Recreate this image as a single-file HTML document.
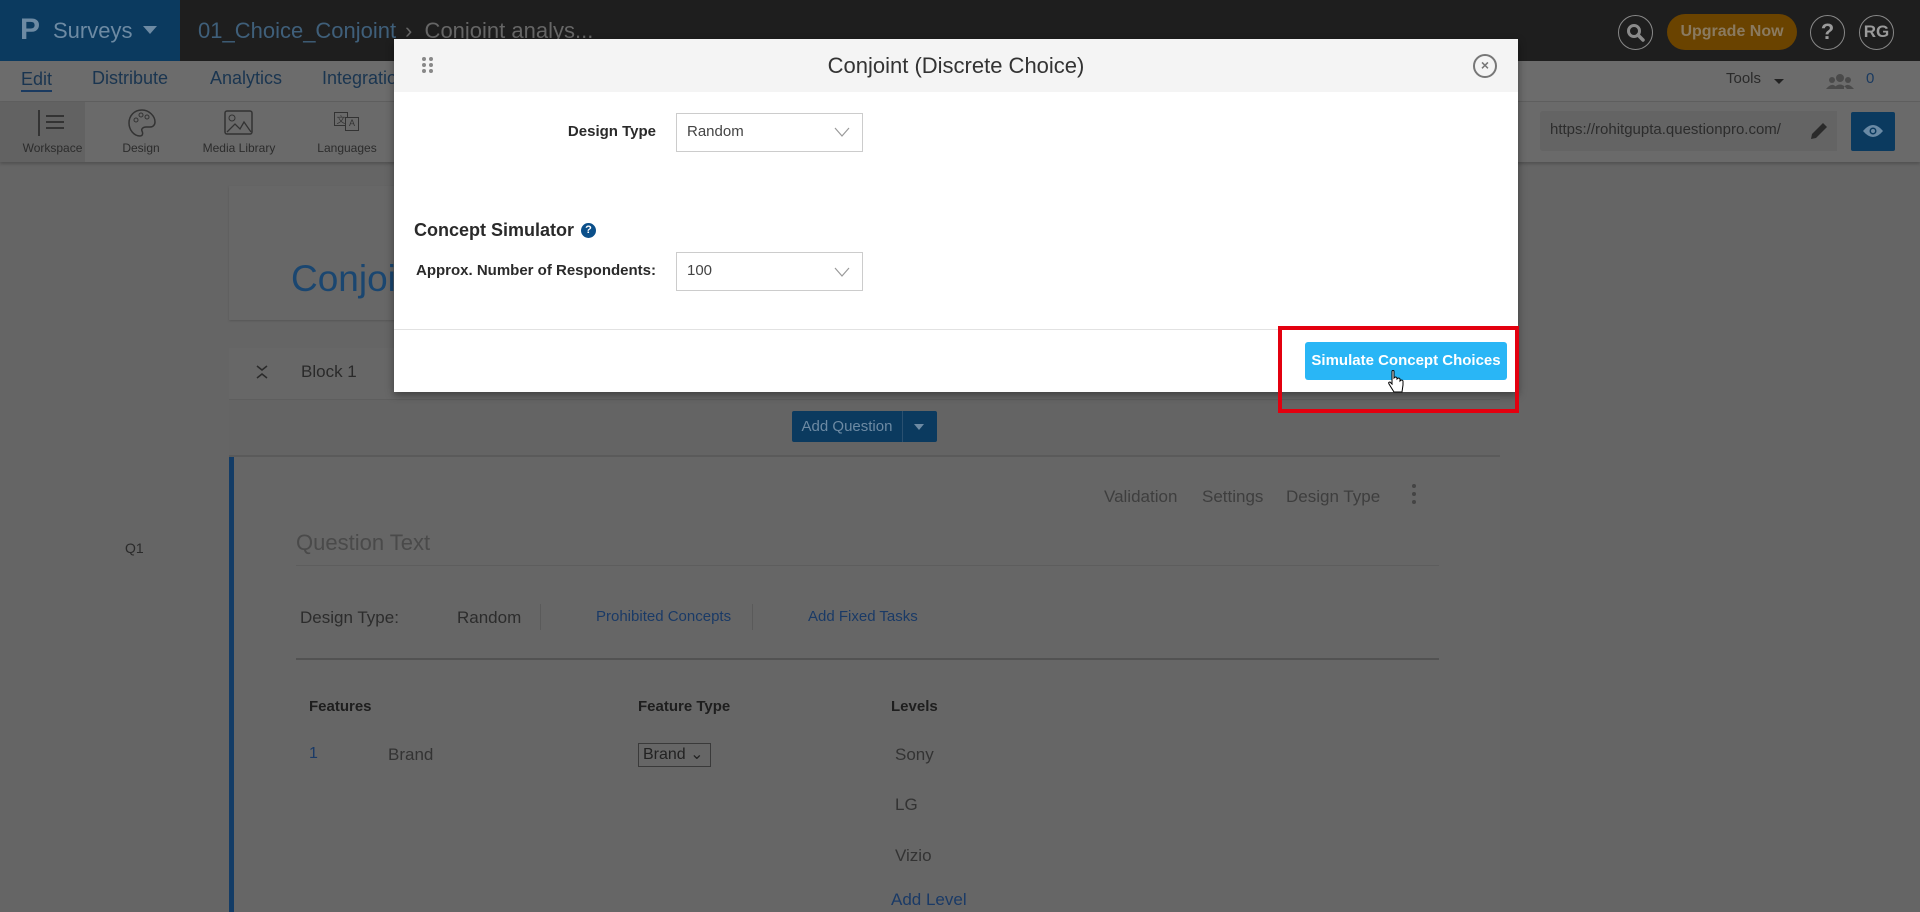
<!DOCTYPE html>
<html><head><meta charset="utf-8"><style>
*{box-sizing:border-box;margin:0;padding:0}
body{width:1920px;height:912px;overflow:hidden;background:#656565;font-family:"Liberation Sans",sans-serif;position:relative;color:#222}
.a{position:absolute;white-space:nowrap}
</style></head><body>
<!-- top bar -->
<div class="a" style="left:0;top:0;width:1920px;height:61px;background:#1e1e1e"></div>
<div class="a" style="left:0;top:0;width:180px;height:61px;background:#0b3a5f"></div>
<div class="a" style="left:20px;top:13px;font-size:30px;color:#6d8aa3;font-weight:bold">P</div>
<div class="a" style="left:53px;top:18px;font-size:22px;color:#6d8aa3">Surveys</div>
<div class="a" style="left:143px;top:26px;width:0;height:0;border-left:7px solid transparent;border-right:7px solid transparent;border-top:8px solid #6d8aa3"></div>
<div class="a" style="left:198px;top:18px;font-size:22px;color:#3f5f7a">01_Choice_Conjoint</div>
<div class="a" style="left:405px;top:18px;font-size:22px;color:#666">›&nbsp; Conjoint analys...</div>
<div class="a" style="left:1618px;top:15px;width:35px;height:35px;border:1.5px solid #888;border-radius:50%"></div>
<svg class="a" style="left:1625px;top:22px" width="22" height="22" viewBox="0 0 22 22"><circle cx="9" cy="9" r="5.5" fill="none" stroke="#8a8a8a" stroke-width="3"/><path d="M13 13l5 5" stroke="#8a8a8a" stroke-width="3.5" stroke-linecap="round"/></svg>
<div class="a" style="left:1667px;top:14px;width:130px;height:36px;border-radius:18px;background:#6a4300;color:#8a7a60;font-size:16px;font-weight:bold;text-align:center;line-height:36px">Upgrade Now</div>
<div class="a" style="left:1810px;top:15px;width:35px;height:35px;border:1.5px solid #888;border-radius:50%;color:#9a9a9a;font-weight:bold;font-size:22px;text-align:center;line-height:32px">?</div>
<div class="a" style="left:1859px;top:15px;width:35px;height:35px;border:1.5px solid #888;border-radius:50%;color:#9a9a9a;font-weight:bold;font-size:17px;text-align:center;line-height:32px">RG</div>
<!-- nav bar -->
<div class="a" style="left:0;top:61px;width:1920px;height:41px;background:#6c6c6c;border-bottom:1px solid #606060"></div>
<div class="a" style="left:21px;top:68px;font-size:18px;color:#1a3550;border-bottom:2px solid #1a3a60;line-height:22px">Edit</div>
<div class="a" style="left:92px;top:68px;font-size:18px;color:#1a3550">Distribute</div>
<div class="a" style="left:210px;top:68px;font-size:18px;color:#1a3550">Analytics</div>
<div class="a" style="left:322px;top:68px;font-size:18px;color:#1a3550">Integrations</div>
<div class="a" style="left:1726px;top:70px;font-size:15px;color:#2a2a2a">Tools</div>
<div class="a" style="left:1774px;top:79px;border-left:5px solid transparent;border-right:5px solid transparent;border-top:5px solid #222"></div>
<svg class="a" style="left:1826px;top:73px" width="28" height="16"><circle cx="14" cy="5" r="4" fill="#4a4a4a"/><circle cx="6" cy="7" r="3" fill="#4a4a4a"/><circle cx="22" cy="7" r="3" fill="#4a4a4a"/><path d="M7 16q7-9 14 0zM0 16q6-7 10-2v2zM28 16q-6-7-10-2v2z" fill="#4a4a4a"/></svg>
<div class="a" style="left:1866px;top:70px;font-size:15px;color:#1a3a60">0</div>
<!-- toolbar -->
<div class="a" style="left:0;top:102px;width:1920px;height:60px;background:#6a6a6a;box-shadow:0 2px 3px rgba(0,0,0,.2)"></div>
<div class="a" style="left:0;top:102px;width:85px;height:60px;background:#626262"></div>
<div class="a" style="left:38px;top:110px;width:2px;height:26px;background:#333"></div>
<div class="a" style="left:46px;top:115px;width:18px;height:2px;background:#333;box-shadow:0 6px 0 #333,0 12px 0 #333"></div>
<div class="a" style="left:0;top:141px;width:105px;text-align:center;font-size:12px;color:#2c2c2c">Workspace</div>
<svg class="a" style="left:127px;top:108px" width="30" height="30"><path d="M15 2C7 2 2 8 2 15s5 13 11 13c3 0 3-3 2-5s1-4 4-4h4c3 0 5-2 5-5C28 8 22 2 15 2z" fill="none" stroke="#333" stroke-width="1.5"/><circle cx="9" cy="12" r="2" fill="none" stroke="#333"/><circle cx="14" cy="7" r="2" fill="none" stroke="#333"/><circle cx="20" cy="9" r="2" fill="none" stroke="#333"/></svg>
<div class="a" style="left:100px;top:141px;width:82px;text-align:center;font-size:12px;color:#2c2c2c">Design</div>
<svg class="a" style="left:224px;top:110px" width="30" height="26"><rect x="1" y="1" width="27" height="23" rx="2" fill="none" stroke="#333" stroke-width="1.5"/><circle cx="8" cy="8" r="3" fill="none" stroke="#333"/><path d="M3 22l8-8 5 5 4-7 7 10" fill="none" stroke="#333" stroke-width="1.3"/></svg>
<div class="a" style="left:190px;top:141px;width:98px;text-align:center;font-size:12px;color:#2c2c2c">Media Library</div>
<div class="a" style="left:334px;top:112px;width:14px;height:14px;border:1.5px solid #333;font-size:9px;text-align:center;color:#333">文</div>
<div class="a" style="left:345px;top:117px;width:14px;height:14px;border:1.5px solid #333;font-size:9px;text-align:center;color:#333;background:#6a6a6a">A</div>
<div class="a" style="left:300px;top:141px;width:94px;text-align:center;font-size:12px;color:#2c2c2c">Languages</div>
<div class="a" style="left:1540px;top:111px;width:297px;height:40px;background:#646464;border-radius:3px"></div>
<div class="a" style="left:1550px;top:121px;font-size:15px;color:#2c2c2c">https://rohitgupta.questionpro.com/</div>
<div class="a" style="left:1790px;top:111px;width:47px;height:40px;background:#646464"></div>
<svg class="a" style="left:1809px;top:121px" width="20" height="20"><path d="M2 18l1-5L14 2l4 4L7 17z" fill="#2a2a2a"/></svg>
<div class="a" style="left:1851px;top:112px;width:44px;height:39px;background:#0b3a5f;border-radius:2px"></div>
<svg class="a" style="left:1862px;top:123px" width="22" height="16"><path d="M1 8q10-12 20 0q-10 12-20 0z" fill="#6a8aa5"/><circle cx="11" cy="8" r="3.5" fill="#0b3a5f"/><circle cx="11" cy="8" r="2" fill="#6a8aa5"/></svg>
<!-- page content -->
<div class="a" style="left:229px;top:186px;width:1271px;height:134px;background:#676767;box-shadow:0 1px 2px rgba(0,0,0,.15)"></div>
<div class="a" style="left:291px;top:258px;font-size:37px;color:#1a4670">Conjoint analysis</div>
<div class="a" style="left:229px;top:348px;width:1271px;height:52px;background:#676767;border-bottom:1px solid #5e5e5e"></div>
<svg class="a" style="left:255px;top:364px" width="14" height="16"><path d="M2 2l5 4 5-4M2 14l5-4 5 4" fill="none" stroke="#2a2a2a" stroke-width="1.5"/></svg>
<div class="a" style="left:301px;top:362px;font-size:17px;color:#2a2a2a">Block 1</div>
<div class="a" style="left:229px;top:400px;width:1271px;height:57px;background:#646464;border-bottom:2px solid #5a5a5a"></div>
<div class="a" style="left:792px;top:411px;width:145px;height:31px;background:#0b3a5f;border-radius:2px"></div>
<div class="a" style="left:792px;top:418px;width:110px;text-align:center;font-size:15px;color:#6d8aa3">Add Question</div>
<div class="a" style="left:902px;top:411px;width:1px;height:31px;background:#2a5070"></div>
<div class="a" style="left:914px;top:424px;border-left:5px solid transparent;border-right:5px solid transparent;border-top:6px solid #6d8aa3"></div>
<div class="a" style="left:229px;top:457px;width:1271px;height:455px;background:#666;border-left:5px solid #133c66"></div>
<div class="a" style="left:125px;top:540px;font-size:14px;color:#2a2a2a">Q1</div>
<div class="a" style="left:1104px;top:487px;font-size:17px;color:#3e3e3e">Validation</div>
<div class="a" style="left:1202px;top:487px;font-size:17px;color:#3e3e3e">Settings</div>
<div class="a" style="left:1286px;top:487px;font-size:17px;color:#3e3e3e">Design Type</div>
<div class="a" style="left:1412px;top:484px;width:4px;height:4px;border-radius:50%;background:#444;box-shadow:0 8px 0 #444,0 16px 0 #444"></div>
<div class="a" style="left:296px;top:530px;font-size:22px;color:#4a4a4a">Question Text</div>
<div class="a" style="left:296px;top:565px;width:1143px;height:1px;background:#5d5d5d"></div>
<div class="a" style="left:300px;top:608px;font-size:17px;color:#2c2c2c">Design Type:</div>
<div class="a" style="left:457px;top:608px;font-size:17px;color:#2c2c2c">Random</div>
<div class="a" style="left:540px;top:604px;width:1px;height:26px;background:#5a5a5a"></div>
<div class="a" style="left:596px;top:608px;font-size:15px;color:#1a3a66">Prohibited Concepts</div>
<div class="a" style="left:752px;top:604px;width:1px;height:26px;background:#5a5a5a"></div>
<div class="a" style="left:808px;top:608px;font-size:15px;color:#1a3a66">Add Fixed Tasks</div>
<div class="a" style="left:296px;top:658px;width:1143px;height:2px;background:#525252"></div>
<div class="a" style="left:309px;top:698px;font-size:15px;font-weight:bold;color:#1e1e1e">Features</div>
<div class="a" style="left:638px;top:698px;font-size:15px;font-weight:bold;color:#1e1e1e">Feature Type</div>
<div class="a" style="left:891px;top:698px;font-size:15px;font-weight:bold;color:#1e1e1e">Levels</div>
<div class="a" style="left:309px;top:745px;font-size:16px;color:#1a3a66">1</div>
<div class="a" style="left:388px;top:745px;font-size:17px;color:#333">Brand</div>
<div class="a" style="left:638px;top:743px;width:73px;height:24px;border:1px solid #3a3a3a;font-size:16px;color:#222;padding-left:4px;line-height:22px">Brand ⌄</div>
<div class="a" style="left:895px;top:745px;font-size:17px;color:#333">Sony</div>
<div class="a" style="left:895px;top:795px;font-size:17px;color:#333">LG</div>
<div class="a" style="left:895px;top:846px;font-size:17px;color:#333">Vizio</div>
<div class="a" style="left:891px;top:890px;font-size:17px;color:#1a3a66">Add Level</div>
<!-- modal -->
<div class="a" style="left:394px;top:39px;width:1124px;height:353px;background:#fff;box-shadow:0 3px 8px rgba(0,0,0,.4)"></div>
<div class="a" style="left:394px;top:39px;width:1124px;height:53px;background:#f4f4f4"></div>
<div class="a" style="left:422px;top:57px;width:4px;height:4px;border-radius:50%;background:#888;box-shadow:7px 0 0 #888,0 6px 0 #888,7px 6px 0 #888,0 12px 0 #888,7px 12px 0 #888"></div>
<div class="a" style="left:394px;top:53px;width:1124px;text-align:center;font-size:22px;color:#333">Conjoint (Discrete Choice)</div>
<div class="a" style="left:1473px;top:54px;width:24px;height:24px;border:2px solid #777;border-radius:50%;font-size:14px;font-weight:bold;color:#777;text-align:center;line-height:19px">×</div>
<div class="a" style="left:500px;top:123px;width:156px;text-align:right;font-size:15px;font-weight:bold;color:#2a2a2a">Design Type</div>
<div class="a" style="left:676px;top:113px;width:187px;height:39px;border:1px solid #ccc"></div>
<div class="a" style="left:687px;top:123px;font-size:15px;color:#444">Random</div>
<svg class="a" style="left:834px;top:126px" width="16" height="12"><path d="M1 2l7 8 7-8" fill="none" stroke="#999" stroke-width="1.2"/></svg>
<div class="a" style="left:414px;top:220px;font-size:18px;font-weight:bold;color:#2a2a2a">Concept Simulator</div>
<div class="a" style="left:581px;top:223px;width:15px;height:15px;border-radius:50%;background:#0b4f8a;color:#fff;font-size:11px;font-weight:bold;text-align:center;line-height:15px">?</div>
<div class="a" style="left:400px;top:262px;width:256px;text-align:right;font-size:15px;font-weight:bold;color:#2a2a2a">Approx. Number of Respondents:</div>
<div class="a" style="left:676px;top:252px;width:187px;height:39px;border:1px solid #ccc"></div>
<div class="a" style="left:687px;top:262px;font-size:15px;color:#444">100</div>
<svg class="a" style="left:834px;top:266px" width="16" height="12"><path d="M1 2l7 8 7-8" fill="none" stroke="#999" stroke-width="1.2"/></svg>
<div class="a" style="left:394px;top:329px;width:1124px;height:1px;background:#e2e2e2"></div>
<div class="a" style="left:1305px;top:342px;width:202px;height:38px;background:#29b6f6;border-radius:3px;color:#fff;font-size:15px;font-weight:bold;text-align:center;line-height:38px">Simulate Concept Choices</div>
<svg class="a" style="left:1387px;top:370px" width="18" height="26"><path d="M5 1v13l-2-2q-2 0-1 2l5 8h8l1-7v-4q-1-2-3 0v-2q-1-2-3 0v-1q-1-2-3 0V1q-1-1-2 0z" fill="#fff" stroke="#000" stroke-width="1"/></svg>
<div class="a" style="left:1278px;top:326px;width:241px;height:87px;border:4px solid #e3000f"></div>
</body></html>
